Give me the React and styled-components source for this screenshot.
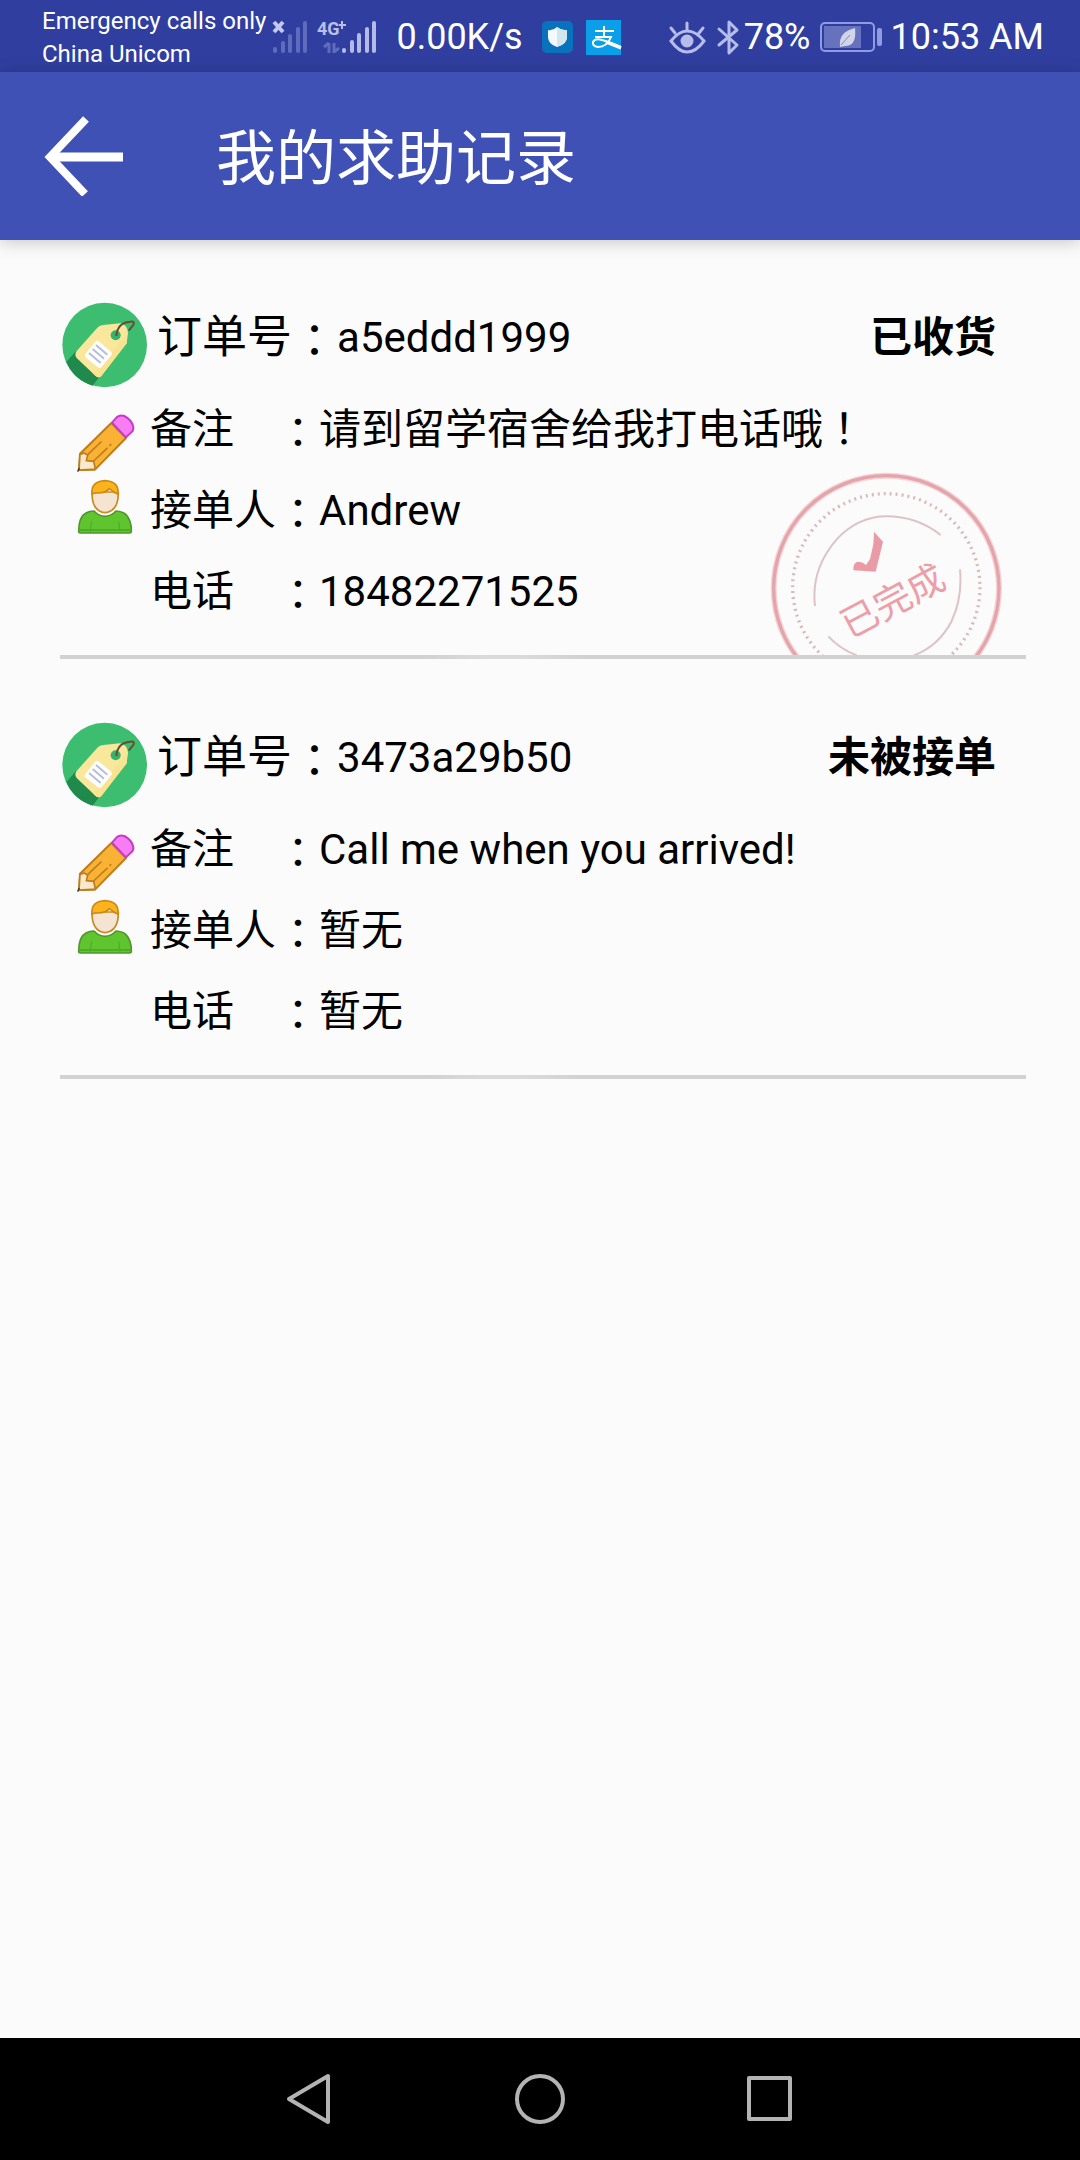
import React from "react";
import styled, { createGlobalStyle } from "styled-components";

const GlobalStyle = createGlobalStyle`
  *, *::before, *::after { box-sizing: border-box; }
  body {
    margin: 0;
    background: #fbfbfb;
    color: #000;
    font-family: Roboto, "Noto Sans CJK SC", sans-serif;
  }
`;

const Screen = styled.div`
  display: flex;
  flex-direction: column;
  min-height: 100vh;
`;

const StatusBar = styled.div`
  display: flex;
  justify-content: space-between;
  align-items: center;
  height: 72px;
  padding: 2px 36px 0 42px;
  background: #303f9f;
  color: #fff;
  white-space: nowrap;
`;

const StatusGroup = styled.div`
  display: flex;
  align-items: center;
  gap: ${(p) => p.$gap}px;
`;

const Carriers = styled.div`
  padding-top: 2px;
  font-size: 24px;
  line-height: 33px;
`;

const StatusText = styled.span`
  font-size: 36px;
  line-height: 70px;
`;

const StatusIcon = styled.svg`
  display: block;
  flex: none;
  overflow: visible;
`;

const AppBar = styled.header`
  display: flex;
  align-items: center;
  gap: 92px;
  height: 168px;
  padding: 0 44px;
  background: #3f51b5;
  color: #fff;
  box-shadow: 0 2px 16px rgba(0, 0, 0, 0.22);
`;

const IconButton = styled.button`
  display: flex;
  align-items: center;
  justify-content: center;
  width: ${(p) => p.$width}px;
  height: 80px;
  padding: 0;
  border: 0;
  background: none;
  color: inherit;
`;

const Title = styled.h1`
  margin: 0;
  padding-top: 8px;
  font-size: 60px;
  line-height: 80px;
  font-weight: 400;
`;

const OrderList = styled.main`
  flex: 1;
  display: flex;
  flex-direction: column;
  gap: 1px;
  padding: 0 54px 0 60px;
`;

const Card = styled.article`
  padding-top: 62px;
`;

const CardHeader = styled.div`
  display: flex;
  align-items: flex-start;
  height: 84px;
  padding-right: 30px;
  line-height: 72px;
`;

const TagSvg = styled.svg`
  display: block;
  flex: none;
  width: 88px;
  height: 84px;
  margin-right: 9px;
  overflow: visible;
`;

const OrderLabel = styled.span`
  font-size: 45px;
`;

const Value = styled.span`
  font-size: 42px;
`;

const Status = styled.strong`
  margin-left: auto;
  font-size: 42px;
  font-weight: 700;
`;

const Mark = styled.span`
  font-family: "Noto Sans CJK TC", sans-serif;
  line-height: 1;
`;

const Colon = styled(Mark)`
  vertical-align: -4px;
`;

const Details = styled.div`
  position: relative;
  padding: 3px 0 23px 15px;
`;

const DetailRow = styled.div`
  display: flex;
  gap: 15px;
  height: 81px;
  font-size: 42px;
  line-height: 81px;
`;

const RowIcon = styled.svg`
  display: block;
  flex: none;
  width: 60px;
  height: 81px;
  overflow: visible;
`;

const Name = styled.span`
  display: inline-block;
  min-width: 127px;
`;

const Divider = styled.hr`
  height: 4px;
  margin: 0;
  border: 0;
  background: linear-gradient(90deg, #d2d2d2 38%, #dadada 44%, #dadada 48%, #d2d2d2 54%);
`;

const StampSvg = styled.svg`
  position: absolute;
  right: 22px;
  bottom: 0;
  width: 234px;
  height: 184px;
`;

const NavBar = styled.nav`
  display: flex;
  justify-content: center;
  align-items: center;
  height: 122px;
  background: #000;
  color: #b3b3b3;
`;

function Tag() {
  return (
    <TagSvg viewBox="60 66 264 252" aria-hidden="true">
      <circle cx="194" cy="195" r="127" fill="#3dbd6f" />
      <path d="M108 213 L79 246 A127 127 0 0 0 158 317 L178 290 Z" fill="#1f8a4c" />
      <path
        d="M190 135 L240 130 Q262 134 264 158 L260 190 L184 288 Q176 296 166 287 L110 234 Q102 224 110 213 L172 143 Q179 135 190 135 Z"
        fill="#f9e79b"
      />
      <path d="M262 160 L260 190 L184 288 Q176 296 166 287 L160 281 Z" fill="#f7e392" />
      <circle cx="227" cy="166" r="15" fill="#35b36a" />
      <path d="M167 184 Q170 180 176 184 L214 216 Q218 221 214 226 L184 262 Q180 267 174 262 L136 232 Q132 227 136 222 Z" fill="#fff" />
      <path d="M168 195 L202 224 M158 207 L192 236 M147 219 L182 249" stroke="#b5bedd" strokeWidth="6" />
      <path d="M229 168 Q232 128 270 125 Q286 122 280 135 L266 152" fill="none" stroke="#6b4b36" strokeWidth="6" />
    </TagSvg>
  );
}

function Pencil() {
  return (
    <RowIcon viewBox="105 327 180 243" aria-hidden="true">
      <g strokeLinejoin="round" strokeLinecap="round">
        <path d="M214 429 L258 474 L165 569 L117 570 L120 521 Z" fill="#f9b233" stroke="#bd7d1c" strokeWidth="6" />
        <path d="M120 523 L133 519 L143 526 L139 542 L161 544 L166 567 L117 570 Z" fill="#fbe8cb" stroke="#bd7d1c" strokeWidth="5" />
        <path d="M143 524 L183 486 M161 543 L201 505 M210 496 L212 494" fill="none" stroke="#bd7d1c" strokeWidth="5" />
        <path d="M216 428 L230 412 Q240 403 253 408 Q276 420 280 441 Q281 451 274 457 L258 472 Z" fill="#f87df5" stroke="#c23fc5" strokeWidth="6" />
        <path d="M114 573 L117 566" stroke="#4b3a22" strokeWidth="5" />
      </g>
    </RowIcon>
  );
}

function Person() {
  return (
    <RowIcon viewBox="105 570 180 243" aria-hidden="true">
      <g strokeLinejoin="round">
        <path
          d="M116 754 Q116 710 138 699 Q148 693 162 693 Q176 708 195 709 Q214 708 228 693 Q248 694 258 704 Q275 722 274 754 Q274 759 268 759 L122 759 Q116 759 116 754 Z"
          fill="#5fc52e"
          stroke="#50962b"
          strokeWidth="5"
        />
        <path d="M120 750 H270" stroke="#4dae25" strokeWidth="6" />
        <path d="M150 755 L155 724 M240 755 L236 724" stroke="#4da62a" strokeWidth="3" />
        <path d="M156 636 Q155 694 195 698 Q236 694 235 636 Z" fill="#f5e4d2" stroke="#c78b20" strokeWidth="5" />
        <path
          d="M156 643 Q152 604 195 602 Q238 604 234 643 Q222 638 208 626 Q196 640 172 639 Q162 638 156 643 Z"
          fill="#fdb41c"
          stroke="#cb8a17"
          strokeWidth="5"
        />
      </g>
    </RowIcon>
  );
}

function Stamp() {
  return (
    <StampSvg viewBox="90 570 702 552" role="img" aria-label="已完成">
      <circle cx="439" cy="922" r="338" fill="none" stroke="#f6d3d6" strokeWidth="18" />
      <circle cx="439" cy="922" r="338" fill="none" stroke="#e3a5ab" strokeWidth="10" />
      <circle cx="439" cy="919" r="281" fill="none" stroke="#d9b9bd" strokeWidth="10" strokeDasharray="6 12" />
      <path
        d="M225 975 Q212 865 290 775 Q355 706 440 706 Q530 706 602 762 M660 865 Q668 950 634 1022 Q595 1095 522 1123 M265 1066 Q300 1104 350 1123"
        fill="none"
        stroke="#ddc3c6"
        strokeWidth="6"
      />
      <path d="M402 752 L429 782 L407 872 L340 868 Q338 848 352 842 Q368 842 378 852 L390 834 L400 790 Z" fill="#ea9ca6" />
      <text
        x="456"
        y="1000"
        transform="rotate(-28 456 956)"
        textAnchor="middle"
        fontFamily='"Noto Sans CJK SC", sans-serif'
        fontSize="112"
        fill="#ec9fa8"
      >
        已完成
      </text>
    </StampSvg>
  );
}

function Detail({ icon, name, children }) {
  return (
    <DetailRow>
      {icon || <RowIcon aria-hidden="true" />}
      <div>
        <Name>{name}</Name>
        <Colon>：</Colon>
        {children}
      </div>
    </DetailRow>
  );
}

function Order({ id, status, note, taker, phone, done }) {
  return (
    <Card>
      <CardHeader>
        <Tag />
        <OrderLabel>
          订单号<Colon>：</Colon>
        </OrderLabel>
        <Value>{id}</Value>
        <Status>{status}</Status>
      </CardHeader>
      <Details>
        {done && <Stamp />}
        <Detail icon={<Pencil />} name="备注">{note}</Detail>
        <Detail icon={<Person />} name="接单人">{taker}</Detail>
        <Detail name="电话">{phone}</Detail>
      </Details>
      <Divider />
    </Card>
  );
}

const orders = [
  {
    id: "a5eddd1999",
    status: "已收货",
    note: <>请到留学宿舍给我打电话哦<Mark>！</Mark></>,
    taker: "Andrew",
    phone: "18482271525",
    done: true,
  },
  {
    id: "3473a29b50",
    status: "未被接单",
    note: "Call me when you arrived!",
    taker: "暂无",
    phone: "暂无",
  },
];

function Signals() {
  return (
    <StatusIcon width="107" height="36" viewBox="-1 0 107 36" aria-hidden="true">
      <path d="M2 3 L11 13 M11 3 L2 13" stroke="#c3c8ee" strokeWidth="4" />
      <g stroke="#5f6cbd" strokeWidth="4" strokeLinecap="round">
        <path d="M3 30V32 M11 24V32 M18 17V32 M26 10V32 M33 4V32" />
      </g>
      <text x="45" y="16" fontFamily="Roboto, sans-serif" fontSize="18" fontWeight="700" fill="#b9bfea">4G</text>
      <path d="M67 6H74 M70 2V10" stroke="#b9bfea" strokeWidth="2" />
      <path d="M57 24V34 M57 24L52 28 M62 24V34 M62 33L67 29" fill="none" stroke="#5f6cbd" strokeWidth="3" />
      <g stroke="#b4bbe8" strokeWidth="4" strokeLinecap="round">
        <path d="M72 31V32 M80 23V32 M87 16V32 M95 10V32 M102 4V32" />
      </g>
    </StatusIcon>
  );
}

export default function App() {
  return (
    <>
      <GlobalStyle />
      <Screen>
        <StatusBar>
          <StatusGroup $gap={18}>
            <StatusGroup $gap={5}>
              <Carriers>
                Emergency calls only
                <br />
                China Unicom
              </Carriers>
              <Signals />
            </StatusGroup>
            <StatusText>0.00K/s</StatusText>
            <StatusGroup $gap={12}>
              <StatusIcon width="33" height="34" viewBox="0 0 33 34" aria-hidden="true">
                <rect x="1" y="1" width="31" height="32" rx="5" fill="#0872bd" />
                <path d="M16 7 Q21 11 26 10 V17 Q26 24 16 27 Q7 24 7 17 V10 Q12 11 16 7Z" fill="#f3f9fc" />
                <path d="M16 7 Q21 11 26 10 V17 Q26 24 16 27Z" fill="#d3e6ee" />
              </StatusIcon>
              <StatusIcon width="35" height="35" viewBox="0 0 35 35" aria-hidden="true">
                <rect width="35" height="35" fill="#0a9fe8" />
                <g fill="none" stroke="#fff">
                  <path d="M9 11H28 M18 6V17" strokeWidth="2" />
                  <path d="M9 17H25 Q21 27 12 27 Q6 26 7 22 Q9 18 16 20 Q24 22 35 27" strokeWidth="2" />
                  <path d="M20 22L35 28" strokeWidth="3" />
                </g>
              </StatusIcon>
            </StatusGroup>
          </StatusGroup>
          <StatusGroup $gap={9}>
            <StatusGroup $gap={5}>
              <StatusIcon width="70" height="36" viewBox="0 0 70 36" fill="none" stroke="#b7bdea" strokeWidth="3" strokeLinecap="round" aria-hidden="true">
                <path d="M2 22 Q10 12 18 12 Q27 12 35 22 Q27 33 18 33 Q10 33 2 22Z M18 11V4 M6 14L2 9 M30 14L34 9" />
                <circle cx="18" cy="22" r="5" fill="#b7bdea" />
                <path d="M50 10L68 26L60 34V3L68 11L50 26" strokeLinejoin="round" />
              </StatusIcon>
              <StatusText>78%</StatusText>
            </StatusGroup>
            <StatusIcon width="62" height="30" viewBox="0 0 62 30" aria-hidden="true">
              <rect x="1" y="1" width="53" height="28" rx="4" fill="none" stroke="#8f9ce4" strokeWidth="2" />
              <rect x="4" y="4" width="37" height="22" fill="#6672be" />
              <rect x="57" y="6" width="5" height="18" rx="2" fill="#8f9ce4" />
              <path d="M35 6 Q37 24 25 24 L20 25 Q18 10 35 6Z" fill="#d2d5e8" />
              <path d="M21 23 L30 13" stroke="#8088c0" strokeWidth="1" />
            </StatusIcon>
            <StatusText>10:53 AM</StatusText>
          </StatusGroup>
        </StatusBar>
        <AppBar>
          <IconButton $width={80} aria-label="返回">
            <svg width="80" height="80" viewBox="0 0 80 80" fill="none" stroke="#fff">
              <path d="M79 41H8" strokeWidth="9" />
              <path d="M42 3L6 41L41 78" strokeWidth="8" />
            </svg>
          </IconButton>
          <Title>我的求助记录</Title>
        </AppBar>
        <OrderList>
          {orders.map((order) => (
            <Order key={order.id} {...order} />
          ))}
        </OrderList>
        <NavBar>
          <IconButton $width={230} aria-label="Back">
            <svg width="54" height="54" viewBox="0 0 54 54" fill="none" stroke="currentColor" strokeWidth="4" strokeLinejoin="round">
              <path d="M45 4V50L6 27Z" />
            </svg>
          </IconButton>
          <IconButton $width={230} aria-label="Home">
            <svg width="54" height="54" viewBox="0 0 54 54" fill="none" stroke="currentColor" strokeWidth="4">
              <circle cx="27" cy="27" r="23" />
            </svg>
          </IconButton>
          <IconButton $width={230} aria-label="Recents">
            <svg width="54" height="54" viewBox="0 0 54 54" fill="none" stroke="currentColor" strokeWidth="4" strokeLinejoin="round">
              <path d="M6 6H47V47H6Z" />
            </svg>
          </IconButton>
        </NavBar>
      </Screen>
    </>
  );
}
